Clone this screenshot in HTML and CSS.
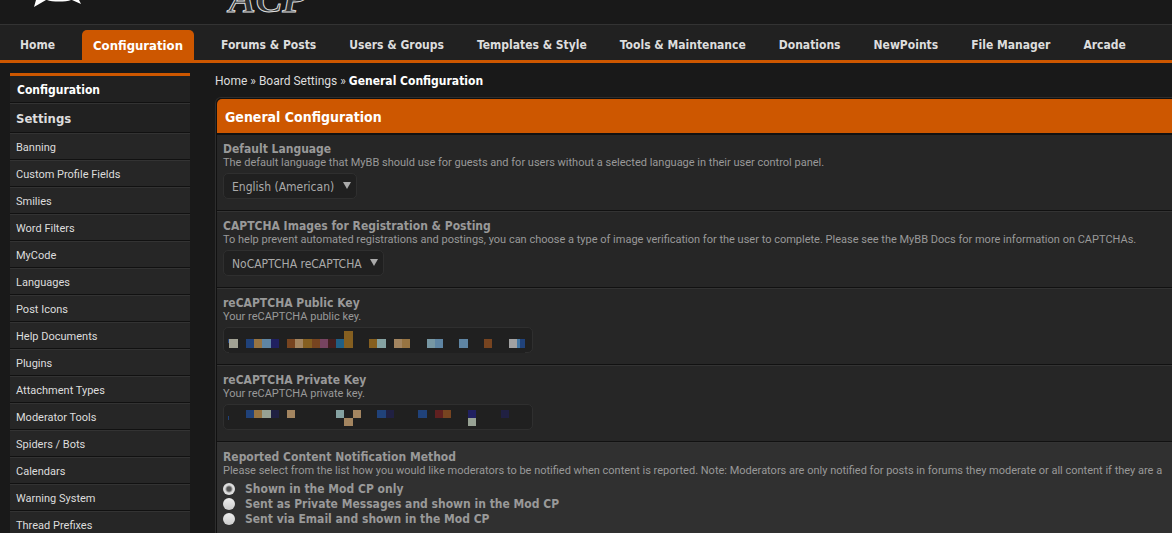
FILE: index.html
```html
<!DOCTYPE html>
<html lang="en">
<head>
    <meta charset="UTF-8">
    <meta name="viewport" content="width=device-width, initial-scale=1.0">
    <title>General Configuration</title>
    <link rel="stylesheet" href="styles.css">
</head>
<body>
    <header class="logo-bar">
        <svg class="logo-mark" width="120" height="24" viewBox="0 0 120 24" aria-hidden="true">
            <path d="M6 0 L4 7 L16 0 Z" fill="#fff"/>
            <path d="M17 0 C22 2 36 2 41 0 Z" fill="#fff"/>
            <path d="M42 0 L51 4 L49 0 Z" fill="#fff"/>
        </svg>
        <span class="logo-text">ACP</span>
    </header>

    <nav class="main-nav">
        <a href="#">Home</a>
        <a href="#" class="active">Configuration</a>
        <a href="#">Forums &amp; Posts</a>
        <a href="#">Users &amp; Groups</a>
        <a href="#">Templates &amp; Style</a>
        <a href="#">Tools &amp; Maintenance</a>
        <a href="#">Donations</a>
        <a href="#">NewPoints</a>
        <a href="#">File Manager</a>
        <a href="#">Arcade</a>
    </nav>

    <div class="page">
        <aside class="sidebar">
            <h2>Configuration</h2>
            <ul>
                <li><a href="#" class="active">Settings</a></li>
                <li><a href="#">Banning</a></li>
                <li><a href="#">Custom Profile Fields</a></li>
                <li><a href="#">Smilies</a></li>
                <li><a href="#">Word Filters</a></li>
                <li><a href="#">MyCode</a></li>
                <li><a href="#">Languages</a></li>
                <li><a href="#">Post Icons</a></li>
                <li><a href="#">Help Documents</a></li>
                <li><a href="#">Plugins</a></li>
                <li><a href="#">Attachment Types</a></li>
                <li><a href="#">Moderator Tools</a></li>
                <li><a href="#">Spiders / Bots</a></li>
                <li><a href="#">Calendars</a></li>
                <li><a href="#">Warning System</a></li>
                <li><a href="#">Thread Prefixes</a></li>
            </ul>
        </aside>

        <main class="content">
            <div class="breadcrumb">
                <a href="#">Home</a> » <a href="#">Board Settings</a> » <strong>General Configuration</strong>
            </div>

            <form class="panel">
                <h1>General Configuration</h1>

                <div class="setting">
                    <label class="title" for="language">Default Language</label>
                    <p>The default language that MyBB should use for guests and for users without a selected language in their user control panel.</p>
                    <div class="select-wrap">
                        <select id="language">
                            <option>English (American)</option>
                        </select>
                    </div>
                </div>

                <div class="setting">
                    <label class="title" for="captcha">CAPTCHA Images for Registration &amp; Posting</label>
                    <p>To help prevent automated registrations and postings, you can choose a type of image verification for the user to complete. Please see the MyBB Docs for more information on CAPTCHAs.</p>
                    <div class="select-wrap">
                        <select id="captcha">
                            <option>NoCAPTCHA reCAPTCHA</option>
                        </select>
                    </div>
                </div>

                <div class="setting">
                    <label class="title" for="publicKey">reCAPTCHA Public Key</label>
                    <p>Your reCAPTCHA public key.</p>
                    <div class="key-field">
                        <input type="text" id="publicKey">
                        <svg class="mask" width="310" height="26" viewBox="0 0 310 26" shape-rendering="crispEdges" aria-hidden="true">
                            <rect x="6" y="25" width="296" height="1" fill="#202020"/>
                            <rect x="5" y="12" width="1" height="4" fill="#20427a"/>
                            <rect x="6" y="12" width="9" height="9" fill="#a2a294"/>
                            <rect x="23" y="12" width="8" height="9" fill="#20427a"/>
                            <rect x="31" y="12" width="8" height="9" fill="#977442"/>
                            <rect x="39" y="12" width="9" height="9" fill="#5f85a3"/>
                            <rect x="48" y="12" width="8" height="9" fill="#202060"/>
                            <rect x="64" y="12" width="8" height="9" fill="#774420"/>
                            <rect x="72" y="12" width="8" height="9" fill="#a38560"/>
                            <rect x="80" y="12" width="9" height="9" fill="#855f20"/>
                            <rect x="89" y="12" width="8" height="9" fill="#774420"/>
                            <rect x="97" y="12" width="8" height="9" fill="#774460"/>
                            <rect x="105" y="12" width="8" height="9" fill="#422020"/>
                            <rect x="113" y="12" width="8" height="9" fill="#205f85"/>
                            <rect x="121" y="4" width="9" height="17" fill="#855f20"/>
                            <rect x="146" y="12" width="8" height="9" fill="#855f20"/>
                            <rect x="154" y="12" width="9" height="9" fill="#85a2a2"/>
                            <rect x="171" y="12" width="8" height="9" fill="#a38560"/>
                            <rect x="179" y="12" width="8" height="9" fill="#977442"/>
                            <rect x="204" y="12" width="8" height="9" fill="#7797a3"/>
                            <rect x="212" y="12" width="8" height="9" fill="#5f85a3"/>
                            <rect x="236" y="12" width="9" height="9" fill="#5f85a3"/>
                            <rect x="261" y="12" width="8" height="9" fill="#774420"/>
                            <rect x="286" y="12" width="8" height="9" fill="#a2a2a2"/>
                            <rect x="294" y="12" width="3" height="9" fill="#4477a3"/>
                            <rect x="297" y="12" width="5" height="9" fill="#20427a"/>
                        </svg>
                    </div>
                </div>

                <div class="setting">
                    <label class="title" for="privateKey">reCAPTCHA Private Key</label>
                    <p>Your reCAPTCHA private key.</p>
                    <div class="key-field">
                        <input type="text" id="privateKey">
                        <svg class="mask" width="310" height="26" viewBox="0 0 310 26" shape-rendering="crispEdges" aria-hidden="true">
                            <rect x="5" y="12" width="1" height="4" fill="#20427a"/>
                            <rect x="23" y="6" width="8" height="8" fill="#20427a"/>
                            <rect x="31" y="6" width="8" height="8" fill="#977442"/>
                            <rect x="39" y="6" width="9" height="8" fill="#97a294"/>
                            <rect x="48" y="6" width="8" height="8" fill="#202042"/>
                            <rect x="64" y="6" width="8" height="8" fill="#a38560"/>
                            <rect x="113" y="6" width="8" height="8" fill="#85a2a2"/>
                            <rect x="121" y="14" width="9" height="8" fill="#a38560"/>
                            <rect x="130" y="6" width="8" height="8" fill="#a38560"/>
                            <rect x="154" y="6" width="9" height="8" fill="#20427a"/>
                            <rect x="163" y="6" width="8" height="8" fill="#202042"/>
                            <rect x="195" y="6" width="9" height="8" fill="#20427a"/>
                            <rect x="212" y="6" width="8" height="8" fill="#602020"/>
                            <rect x="220" y="6" width="8" height="8" fill="#774420"/>
                            <rect x="245" y="6" width="8" height="8" fill="#202060"/>
                            <rect x="245" y="14" width="8" height="8" fill="#97a294"/>
                            <rect x="278" y="6" width="8" height="8" fill="#202042"/>
                        </svg>
                    </div>
                </div>

                <fieldset class="setting highlight">
                    <legend class="title">Reported Content Notification Method</legend>
                    <p>Please select from the list how you would like moderators to be notified when content is reported. Note: Moderators are only notified for posts in forums they moderate or all content if they are a</p>
                    <div class="radio-list">
                        <label><input type="radio" name="report" checked> Shown in the Mod CP only</label>
                        <label><input type="radio" name="report"> Sent as Private Messages and shown in the Mod CP</label>
                        <label><input type="radio" name="report"> Sent via Email and shown in the Mod CP</label>
                    </div>
                </fieldset>
            </form>
        </main>
    </div>
</body>
</html>
```

FILE: styles.css
```css
* {
    margin: 0;
    padding: 0;
    box-sizing: border-box;
}

body {
    background-color: #191919;
    color: #ddd;
    font-family: Tahoma, Roboto, sans-serif;
    font-size: 12px;
    line-height: 15px;
    height: 100vh;
    overflow: hidden;
}

a {
    color: #ddd;
    text-decoration: none;
}

h1,
h2,
strong,
.main-nav a,
.sidebar li a.active,
.title,
.radio-list label {
    font-family: Tahoma, "DejaVu Sans Condensed", sans-serif;
    font-weight: bold;
}

/* Header */
.logo-bar {
    display: flex;
    align-items: flex-end;
    gap: 79px;
    height: 24px;
    padding-left: 30px;
    overflow: hidden;
}

.logo-mark {
    flex: none;
}

.logo-text {
    font-family: "Liberation Serif", serif;
    font-size: 40px;
    font-style: italic;
    font-weight: bold;
    line-height: 50px;
    color: #2b2f31;
    -webkit-text-stroke: 1px #ddd;
}

/* Top menu */
.main-nav {
    display: flex;
    align-items: flex-end;
    gap: 21px;
    height: 39px;
    padding-left: 14px;
    background-color: #212121;
    border-top: 1px solid #333;
    border-bottom: 3px solid #cd5700;
    white-space: nowrap;
}

.main-nav a {
    padding: 8px 6px 7px;
}

.main-nav a.active {
    height: 30px;
    padding: 8px 11px;
    background-color: #cd5700;
    border-radius: 5px 5px 0 0;
    color: #fff;
    font-size: 13px;
}

.page {
    display: flex;
    gap: 25px;
    padding: 10px 0 0 10px;
}

/* Left menu */
.sidebar {
    flex: 0 0 180px;
    border-top: 3px solid #cd5700;
}

.sidebar h2 {
    height: 27px;
    padding: 7px 7px 4px;
    background-color: #212121;
    border-bottom: 1px solid #111;
    color: #fff;
    font-size: 12px;
}

.sidebar ul {
    list-style: none;
}

.sidebar li a {
    display: block;
    height: 27px;
    padding: 7px 6px 4px;
    background-color: #262626;
    border-top: 1px solid #333;
    border-bottom: 1px solid #111;
    font-size: 11px;
    line-height: 14px;
}

.sidebar li a.active {
    height: 30px;
    padding-top: 8px;
    background-color: #212121;
    font-size: 13px;
}

/* Content */
.content {
    flex: 1;
    min-width: 0;
}

.breadcrumb {
    height: 15px;
    margin-bottom: 9px;
    line-height: 16px;
}

.breadcrumb strong {
    color: #fff;
}

.panel {
    padding: 1px 0 0 1px;
    background-color: #111;
    border: 1px solid #2d2d2d;
    border-right: none;
    border-radius: 6px 0 0 0;
}

.panel h1 {
    height: 34px;
    padding: 10px 8px;
    background-color: #cd5700;
    border-radius: 5px 0 0 0;
    color: #fff;
    font-size: 14px;
    line-height: 16px;
}

.setting {
    height: 77px;
    padding: 7px 0 0 6px;
    background-color: #262626;
    border: none;
    border-top: 1px solid #333;
    border-bottom: 1px solid #111;
    color: #999;
    overflow: hidden;
    white-space: nowrap;
}

.panel h1 + .setting {
    height: 78px;
    border-top: 2px solid #111;
}

.setting.highlight {
    height: 110px;
    background-color: #303030;
}

.title {
    display: block;
    font-size: 12px;
    line-height: 14px;
}

.highlight .title {
    float: left;
    width: 100%;
}

.setting p {
    clear: both;
    font-size: 11px;
    line-height: 14px;
}

.select-wrap {
    position: relative;
    display: inline-block;
    margin-top: 3px;
}

.select-wrap::after {
    content: "";
    position: absolute;
    top: 9px;
    right: 6px;
    border: 4px solid transparent;
    border-top: 7px solid #aaa;
    border-bottom: none;
    pointer-events: none;
}

select,
input[type="text"] {
    display: block;
    height: 26px;
    background-color: #202020;
    border: 1px solid #2f2f2f;
    border-radius: 5px;
    color: #aaa;
    font-family: Tahoma, "DejaVu Sans Condensed", sans-serif;
    font-size: 12px;
}

select {
    padding: 1px 21px 0 8px;
    appearance: none;
}

.key-field {
    position: relative;
    width: 310px;
    margin-top: 3px;
}

.key-field input {
    width: 100%;
}

.mask {
    position: absolute;
    top: 0;
    left: 0;
}

.radio-list {
    margin-top: 4px;
}

.radio-list label {
    display: flex;
    align-items: flex-start;
    gap: 10px;
}

.radio-list input {
    width: 12px;
    height: 12px;
    margin-top: 1px;
    appearance: none;
    background: linear-gradient(#eee, #ccc);
    border-radius: 50%;
}

.radio-list input:checked {
    background: radial-gradient(circle, #555 0 2px, #ddd 4px);
}
```
